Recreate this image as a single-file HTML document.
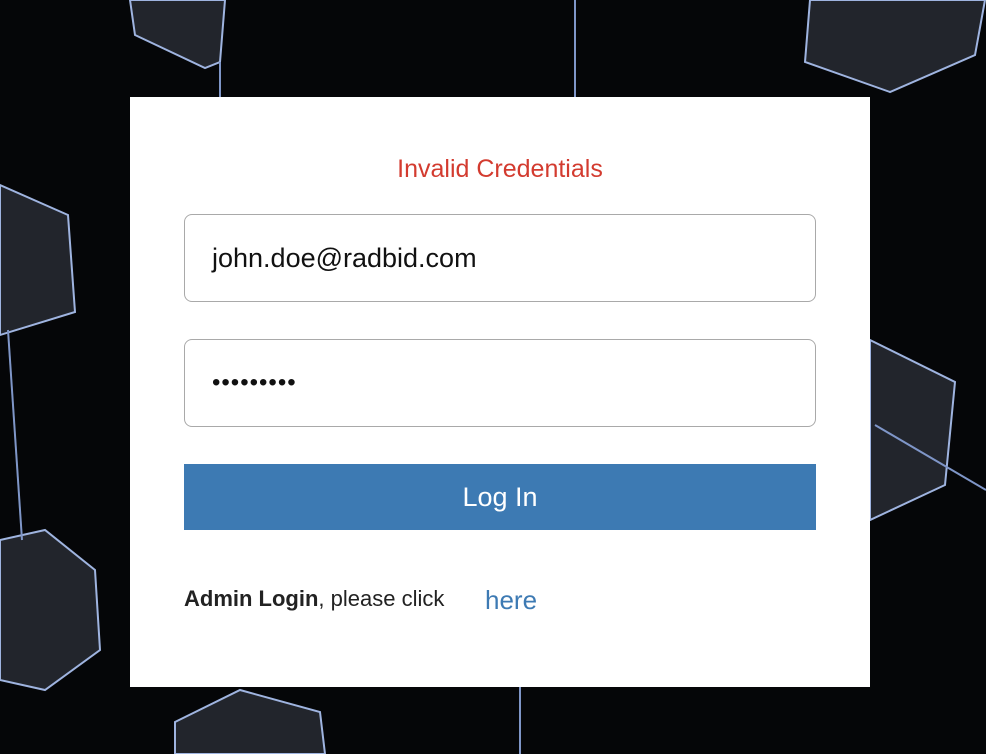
<!DOCTYPE html>
<html><head><meta charset="utf-8"><style>
html,body{margin:0;padding:0;width:986px;height:754px;overflow:hidden;background:#050608;font-family:"Liberation Sans",sans-serif}
svg.bg{position:absolute;left:0;top:0}
.card{position:absolute;left:130px;top:97px;width:740px;height:590px;background:#fff}
.title{position:absolute;top:58px;left:0;width:740px;text-align:center;color:#d33b2f;font-size:25px}
.inp{position:absolute;left:54px;width:632px;height:88px;border:1px solid #a9a9a9;border-radius:8px;box-sizing:border-box;font-size:27px;color:#111;padding-left:27px;line-height:86px}
.btn{position:absolute;left:54px;top:367px;width:632px;height:66px;background:#3d7ab3;color:#fff;font-size:27px;text-align:center;line-height:66px}
.foot{position:absolute;left:54px;top:489px;font-size:22px;color:#222}
.here{position:absolute;left:355px;top:488px;font-size:26px;color:#3d7ab3}
</style></head><body>
<svg class="bg" width="986" height="754" viewBox="0 0 986 754">
<g stroke="#9fb4e0" stroke-width="2" fill="#22252c">
<polygon points="130,0 225,0 220,62 205,68 135,35"/>
<polygon points="810,0 985,0 975,55 890,92 805,62"/>
<polygon points="0,185 68,215 75,312 0,335"/>
<polygon points="0,540 45,530 95,570 100,650 45,690 0,680"/>
<polygon points="870,340 955,382 945,485 870,520"/>
<polygon points="175,722 240,690 320,712 325,754 175,754"/>
</g>
<g stroke="#7f96c8" stroke-width="2">
<line x1="575" y1="0" x2="575" y2="97"/><line x1="220" y1="62" x2="220" y2="97"/>
<line x1="8" y1="330" x2="22" y2="540"/><line x1="520" y1="687" x2="520" y2="754"/>
<line x1="875" y1="425" x2="986" y2="490"/>
</g>
</svg>
<div class="card">
<div class="title">Invalid Credentials</div>
<div class="inp" style="top:117px">john.doe@radbid.com</div>
<div class="inp" style="top:242px;font-size:24px;letter-spacing:1px">•••••••••</div>
<div class="btn">Log In</div>
<div class="foot"><b>Admin Login</b>, please click</div>
<div class="here">here</div>
</div>
</body></html>
